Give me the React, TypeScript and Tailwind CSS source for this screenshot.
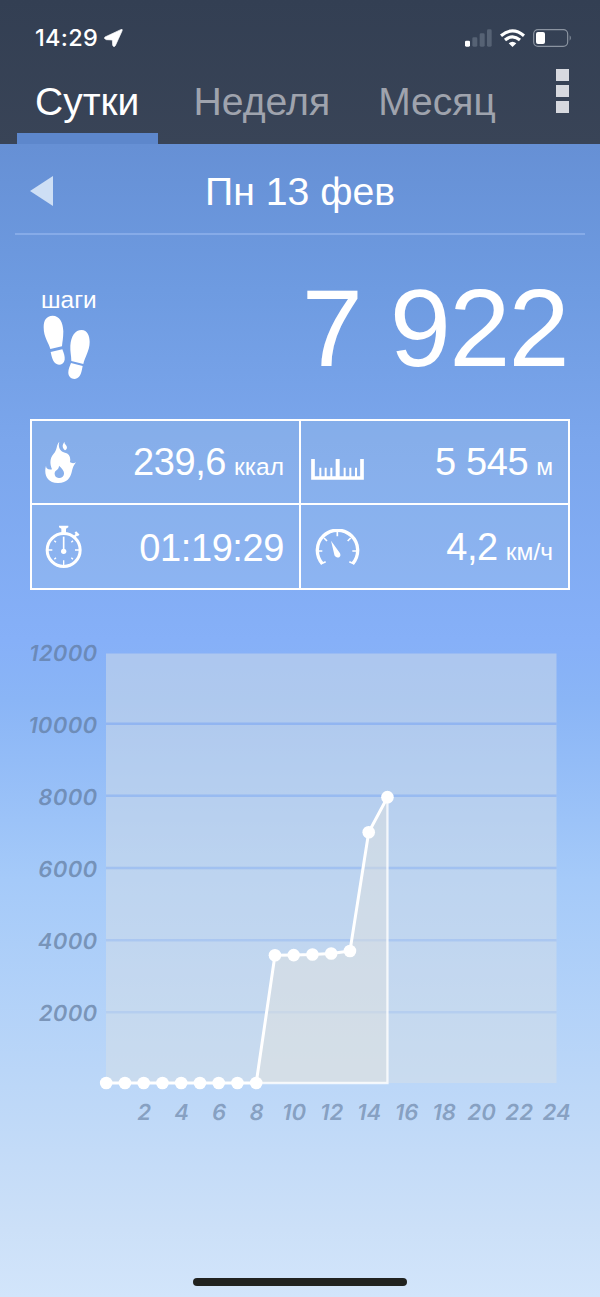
import type { ReactNode } from 'react';

const steps = [0, 0, 0, 0, 0, 0, 0, 0, 0, 3540, 3545, 3560, 3590, 3660, 6950, 7922];
const yTicks = [12000, 10000, 8000, 6000, 4000, 2000];
const xTicks = [2, 4, 6, 8, 10, 12, 14, 16, 18, 20, 22, 24];

const px = (hour: number) => 106.2 + hour * 18.75;
const py = (value: number) => 453 - value * 0.03608;

const StatusBar = () => {
  return (
    <div className="flex h-[66px] items-start justify-between pl-[35px] pr-[28px] pt-[24px]">
      <div className="flex items-center gap-[6px]">
        <span className="w-[63px] whitespace-nowrap font-['Inter',sans-serif] text-[23.5px] font-medium leading-7 tracking-[0.3px] text-white">
          14:29
        </span>
        <svg className="h-[18px] w-[19px]" viewBox="0 0 57 54" fill="#fff">
          <path d="M3 24 L50 2 Q57 -1 54 6 L34 50 Q29 57 26 49 L25 33 L7 32 Q-2 29 3 24Z" stroke="#fff" strokeWidth="2" />
        </svg>
      </div>
      <div className="flex h-7 items-center gap-[8px]">
        {/* Signal */}
        <svg className="h-[18px] w-[27px]" viewBox="0 0 81 54">
          <rect x="0" y="35" width="15" height="18" rx="4" fill="#fff" />
          <rect x="22" y="25" width="15" height="28" rx="4" fill="#566274" />
          <rect x="44" y="13" width="15" height="40" rx="4" fill="#566274" />
          <rect x="66" y="1" width="14" height="52" rx="4" fill="#566274" />
        </svg>
        {/* Wifi */}
        <svg className="h-[18px] w-[25px]" viewBox="0 0 75 54" fill="none" stroke="#fff" strokeWidth="9.500">
          <path d="M3 20 Q37.500 -9 72 20" />
          <path d="M15 33 Q37.500 14 60 33" />
          <path d="M26 43 Q37.500 33 49 43 L37.500 54Z" fill="#fff" stroke="none" />
        </svg>
        {/* Battery */}
        <svg className="h-[18px] w-[39px]" viewBox="0 0 117 54">
          <rect x="2" y="2" width="102" height="50" rx="13" fill="none" stroke="#8b94a1" strokeWidth="3.500" />
          <rect x="9" y="9" width="27" height="36" rx="6" fill="#fff" />
          <path d="M110 19 Q117 27 110 35Z" fill="#8b94a1" />
        </svg>
      </div>
    </div>
  );
};

const Tabs = () => {
  return (
    <div className="flex h-[78px] items-stretch">
      <div className="ml-[17px] flex w-[140.5px] flex-col justify-between text-white">
        <span className="whitespace-nowrap pl-[18px] pt-[13px] text-[39px] leading-[46px]">Сутки</span>
        <div className="h-[11px] bg-[#5d87cc]"></div>
      </div>
      <span className="ml-[36px] pt-[13px] text-[39.2px] leading-[46px] text-[#9fa3ad]">Неделя</span>
      <span className="ml-[48px] pt-[13px] text-[39px] leading-[46px] text-[#9fa3ad]">Месяц</span>
      <div className="ml-auto mr-[31px] flex flex-col gap-[4px] pt-[3px]">
        <div className="h-[12px] w-[13px] bg-[#d7d9df]"></div>
        <div className="h-[12px] w-[13px] bg-[#d7d9df]"></div>
        <div className="h-[12px] w-[13px] bg-[#d7d9df]"></div>
      </div>
    </div>
  );
};

const Footprints = () => (
  <svg className="ml-[1.500px] mt-px h-[65px] w-[48px]" viewBox="68 135 144 195" fill="#fff">
    <path d="M97 137 C117 137 128 156 129 184 C129 204 126 216 125 229 L90 237 C86 219 70 203 70 172 C70 150 78 138 97 137Z" />
    <path d="M91 246 L126 238 C131 250 134 260 133 269 C131 282 118 287 109 282 C98 277 95 264 91 246Z" />
    <path d="M184 180 C201 181 208 197 208 216 C208 242 193 262 189 282 L153 273 C153 255 149 245 150 227 C152 198 164 180 184 180Z" />
    <path d="M152 279 L187 288 C184 305 181 320 170 325 C158 331 143 322 144 307 C144 297 148 289 152 279Z" />
  </svg>
);

const FlameIcon = () => (
  <svg className="h-[43px] w-[32px]" viewBox="74 91 96 129" fill="#fff">
    <path
      fillRule="evenodd"
      d="M117 93 C107 103 112 116 100 129 C88 142 88 160 95 176 C84 178 77 174 77 165 C70 190 79 217 112 217 C139 218 150 202 154 185 C157 171 161 162 167 155 C160 159 153 158 149 154 C152 138 146 128 134 126 C120 123 112 111 117 93Z M116 165 C126 174 132 181 131 190 C130 199 122 203 115 202 C107 201 102 195 103 187 C104 180 109 180 112 176 C115 172 116 169 116 165Z"
    />
    <path d="M133 93 C124 103 126 111 134 119 C143 113 140 107 136 102 C133 99 132 97 133 93Z" />
  </svg>
);

const StopwatchIcon = () => (
  <svg className="h-[43px] w-[38px]" viewBox="76 346 114 129" fill="none" stroke="#fff">
    <circle cx="132" cy="421" r="49.500" strokeWidth="9" />
    <path d="M118 348 H146 V353 L139 357 V370 H125 V357 L118 353Z" fill="#fff" stroke="none" />
    <path d="M163 383 L173 372 M167 367 L177 377" strokeWidth="7" />
    <path
      d="M132 452 V468 M83 421 H98 M166 421 H181 M104 393 L109 398 M160 393 L155 398 M104 449 L109 444 M160 449 L155 444"
      strokeWidth="4"
    />
    <path d="M132 381 V421" strokeWidth="5" />
    <circle cx="132" cy="425" r="8" fill="#fff" stroke="none" />
  </svg>
);

const RulerIcon = () => (
  <svg className="mt-[15px] h-[21px] w-[53px]" viewBox="63 149 159 63" fill="none" stroke="#fff">
    <path d="M69 149 V206 H216 V149" strokeWidth="11" />
    <path d="M143 149 V206" strokeWidth="12" />
    <path d="M91 175 V206 M107 175 V206 M124 175 V206 M164 175 V206 M181 175 V206 M198 175 V206" strokeWidth="6" />
  </svg>
);

const GaugeIcon = () => (
  <svg className="mt-px h-[37px] w-[45px]" viewBox="76 356 135 111" fill="none" stroke="#fff">
    <path d="M98 460 A60.500 60.500 0 1 1 189 460" strokeWidth="10" />
    <path
      d="M143 364 V378 M84 422 H98 M188 422 H203 M103 383 L112 392 M183 383 L174 392 M93 461 L108 454 M194 461 L179 454"
      strokeWidth="5"
    />
    <path d="M124 391 L151 429 C155 438 149 444 141 441 C135 439 134 434 133 429Z" fill="#fff" stroke="none" />
  </svg>
);

type StatProps = {
  icon: ReactNode;
  value: string;
  unit?: string;
  className: string;
};

const Stat = ({ icon, value, unit, className }: StatProps) => {
  return (
    <div className={`flex items-center justify-between border-white pr-[15px] text-white ${className}`}>
      {icon}
      <div className="flex items-baseline gap-[8px] whitespace-nowrap pt-[2px]">
        <span className="text-[38px] leading-[44px] tracking-[-0.4px]">{value}</span>
        {unit && <span className="text-[24.5px]">{unit}</span>}
      </div>
    </div>
  );
};

const Chart = () => {
  const line = steps.map((value, hour) => `${px(hour)},${py(value)}`).join(' ');

  return (
    <svg
      className="block h-[510px] w-[600px] font-['Inter',sans-serif] text-[22px] font-semibold"
      viewBox="0 0 600 510"
    >
      <rect x="106" y="23.500" width="450.500" height="429.500" fill="#dae1e4" fillOpacity="0.46" />

      {yTicks.map((tick) => (
        <g key={tick}>
          {tick < 12000 && (
            <line x1="106" x2="556.500" y1={py(tick) + 1.5} y2={py(tick) + 1.5} stroke="#82abf2" strokeOpacity={0.12 + tick / 18000} strokeWidth="2.500" />
          )}
          <text
            transform={`translate(96.5 ${py(tick) + 10.5}) skewX(-10)`}
            textAnchor="end"
            fill="#5d7698"
            fillOpacity="0.66"
            letterSpacing="0.4"
          >
            {tick}
          </text>
        </g>
      ))}

      {/* Area under the line */}
      <polygon points={`${px(8)},453 ${line} ${px(15)},453`} fill="#e3e2de" fillOpacity="0.45" />
      <path d={`M${px(8)} 453 H${px(15)} V${py(7922)}`} fill="none" stroke="#fff" strokeOpacity="0.8" strokeWidth="2.300" />
      <polyline points={line} fill="none" stroke="#fff" strokeWidth="3" strokeLinejoin="round" />
      {steps.map((value, hour) => (
        <circle key={hour} cx={px(hour)} cy={py(value)} r="6.300" fill="#fff" />
      ))}

      {xTicks.map((tick) => (
        <text
          key={tick}
          transform={`translate(${px(tick) - 0.5} 490) skewX(-10)`}
          textAnchor="middle"
          fill="#5d7698"
          fillOpacity="0.58"
          letterSpacing="0.3"
        >
          {tick}
        </text>
      ))}
    </svg>
  );
};

const App = () => {
  return (
    <div className="flex h-[1297px] w-[600px] flex-col overflow-hidden bg-[linear-gradient(180deg,#6690d5_145px,#6e9be1_290px,#7ba6ec_440px,#86b0f8_640px,#8ab5f6_700px,#a5caf9_880px,#bad6f8_1070px,#cce0f8_1230px,#d2e5fb_1297px)] font-['Liberation_Sans',Arial,sans-serif]">
      <header className="h-[144px] bg-gradient-to-b from-[#333f53] to-[#394457]">
        <StatusBar />
        <Tabs />
      </header>

      {/* Date */}
      <div className="mx-[15px] flex h-[91px] items-center border-b-2 border-[#86abe8] pt-[4px]">
        <svg className="ml-[15px] h-[30px] w-[23px]" viewBox="0 0 23 30">
          <path d="M0 15 L23 0 V30Z" fill="#cedff5" />
        </svg>
        <h1 className="mr-[38px] flex-1 pt-[2px] text-center text-[39.2px] leading-[46px] text-white">Пн 13 фев</h1>
      </div>

      {/* Steps */}
      <div className="flex h-[184px] items-start justify-between pl-[41px] pr-[32px] text-white">
        <div className="flex flex-col pt-[51px]">
          <span className="text-[24.4px] leading-[28px]">шаги</span>
          <Footprints />
        </div>
        <span className="pt-[33px] text-[110px] leading-[120px] tracking-[-1.800px]">7 922</span>
      </div>

      <div className="mx-[30px] grid h-[171px] grid-cols-[269px_267px] grid-rows-[84px_83px] border-2 border-white bg-[#b4d2e8]/20">
        <Stat icon={<FlameIcon />} value="239,6" unit="ккал" className="border-b-2 border-r-2 pl-[13px]" />
        <Stat icon={<RulerIcon />} value="5 545" unit="м" className="border-b-2 pl-[10px]" />
        <Stat icon={<StopwatchIcon />} value="01:19:29" className="border-r-2 pl-[13px]" />
        <Stat icon={<GaugeIcon />} value="4,2" unit="км/ч" className="pl-[14px]" />
      </div>

      <div className="mt-[40px]">
        <Chart />
      </div>

      <div className="mx-auto mb-[11px] mt-auto h-[8px] w-[214px] rounded-full bg-[#202220]"></div>
    </div>
  );
};

export default App;
